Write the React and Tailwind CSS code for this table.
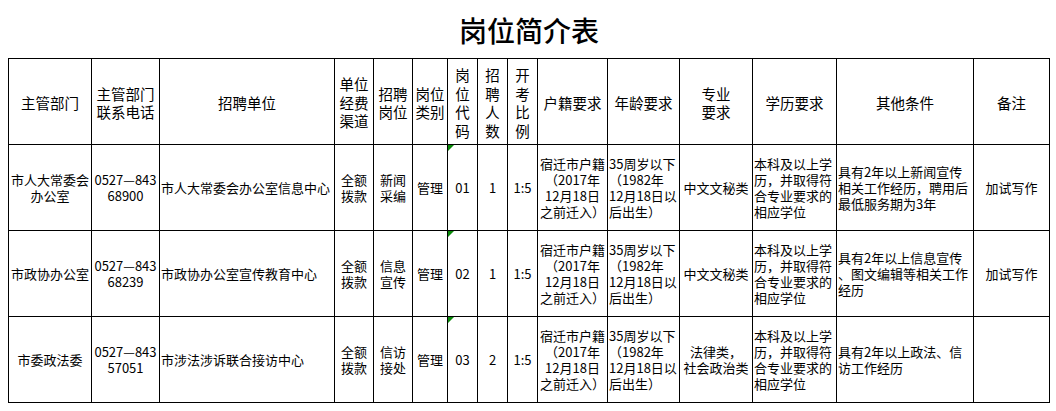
import React from "react";

const FONT = "font-['Noto_Sans_CJK_SC','Noto_Sans',sans-serif]";

const headers = [
  ["主管部门"],
  ["主管部门", "联系电话"],
  ["招聘单位"],
  ["单位", "经费", "渠道"],
  ["招聘", "岗位"],
  ["岗位", "类别"],
  ["岗", "位", "代", "码"],
  ["招", "聘", "人", "数"],
  ["开", "考", "比", "例"],
  ["户籍要求"],
  ["年龄要求"],
  ["专业", "要求"],
  ["学历要求"],
  ["其他条件"],
  ["备注"],
];

// alignment per column: c = center, l = left
const align = ["c", "c", "l", "c", "c", "c", "c", "c", "c", "c", "l", "c", "l", "l", "c"];

const huji = ["宿迁市户籍", "（2017年", "12月18日", "之前迁入）"];
const age = ["35周岁以下", "（1982年", "12月18日以", "后出生）"];
const edu = ["本科及以上学", "历，并取得符", "合专业要求的", "相应学位"];

const rows = [
  [
    ["市人大常委会", "办公室"],
    ["0527—843", "68900"],
    ["市人大常委会办公室信息中心"],
    ["全额", "拨款"],
    ["新闻", "采编"],
    ["管理"],
    ["01"],
    ["1"],
    ["1:5"],
    huji,
    age,
    ["中文文秘类"],
    edu,
    ["具有2年以上新闻宣传", "相关工作经历，聘用后", "最低服务期为3年"],
    ["加试写作"],
  ],
  [
    ["市政协办公室"],
    ["0527—843", "68239"],
    ["市政协办公室宣传教育中心"],
    ["全额", "拨款"],
    ["信息", "宣传"],
    ["管理"],
    ["02"],
    ["1"],
    ["1:5"],
    huji,
    age,
    ["中文文秘类"],
    edu,
    ["具有2年以上信息宣传", "、图文编辑等相关工作", "经历"],
    ["加试写作"],
  ],
  [
    ["市委政法委"],
    ["0527—843", "57051"],
    ["市涉法涉诉联合接访中心"],
    ["全额", "拨款"],
    ["信访", "接处"],
    ["管理"],
    ["03"],
    ["2"],
    ["1:5"],
    huji,
    age,
    ["法律类，", "社会政治类"],
    edu,
    ["具有2年以上政法、信", "访工作经历"],
    [""],
  ],
];

function Lines({ lines }) {
  return (
    <>
      {lines.map((l, i) => (
        <span key={i} className="block whitespace-nowrap">
          {l}
        </span>
      ))}
    </>
  );
}

export default function App() {
  return (
    <div className={`w-[1056px] h-[411px] bg-white text-black ${FONT}`}>
      <div className="h-[58px] flex items-center justify-center pl-[2px] pt-[2px]">
        <span className="text-[28px] leading-[32px] font-medium tracking-[0px]">岗位简介表</span>
      </div>
      <div className="ml-[8px] w-[1042px] border-l border-t border-black grid grid-cols-[83px_68px_175px_39px_39px_35px_30px_30px_30px_70px_72px_73px_84px_137px_76px] grid-rows-[86px_86px_86px_86px]">
        {headers.map((h, i) => (
          <div
            key={"h" + i}
            className="border-r border-b border-black flex flex-col items-center justify-center text-center text-[14.5px] leading-[18.5px] pt-[3px]"
          >
            <Lines lines={h} />
          </div>
        ))}
        {rows.map((r, ri) =>
          r.map((cell, ci) => (
            <div
              key={ri + "-" + ci}
              className={
                "relative border-r border-b border-black flex flex-col justify-center text-[13px] leading-[16px] " +
                (align[ci] === "c" ? "items-center text-center" : "items-start text-left pl-[1px]")
              }
            >
              {ci === 6 && (
                <span className="absolute top-0 left-0 w-0 h-0 border-t-[6px] border-t-[#0a8a0a] border-r-[6px] border-r-transparent" />
              )}
              <Lines lines={cell} />
            </div>
          ))
        )}
      </div>
    </div>
  );
}
